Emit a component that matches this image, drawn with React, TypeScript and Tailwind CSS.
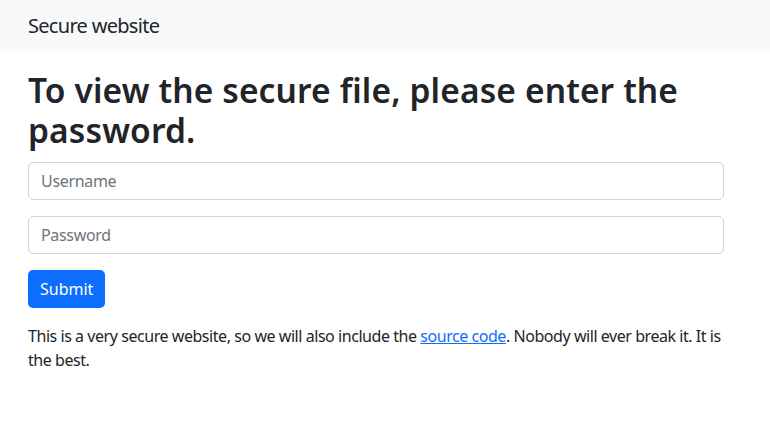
import React from "react";

export default function App() {
  const font = { fontFamily: '"Noto Sans", "Open Sans", Arial, sans-serif' };
  return (
    <div className="min-h-[421px] bg-white text-[#212529]" style={font}>
      <nav className="h-[51px] bg-[#f8f9fa] flex items-center px-[28px]">
        <span className="text-[20px] leading-[30px] tracking-[-0.035em]">Secure website</span>
      </nav>
      <main className="w-[752px] px-[28px]">
        <h1 className="mt-[19px] mb-[12px] text-[33.5px] leading-[40px] font-semibold tracking-[0.004em]">
          To view the secure file, please enter the password.
        </h1>
        <form className="flex flex-col">
          <input
            type="text"
            placeholder="Username"
            className="h-[38px] w-full rounded-[5px] border border-[#ced4da] px-[12px] text-[16px] tracking-[-0.02em] placeholder:text-[#6c757d] outline-none"
          />
          <input
            type="password"
            placeholder="Password"
            className="mt-[16px] h-[38px] w-full rounded-[5px] border border-[#ced4da] px-[12px] text-[16px] tracking-[-0.02em] placeholder:text-[#6c757d] outline-none"
          />
          <div className="mt-[16px]">
            <button
              type="button"
              className="h-[38px] rounded-[5px] bg-[#0d6efd] px-[12px] text-[16px] text-white"
            >
              Submit
            </button>
          </div>
        </form>
        <p className="mt-[16px] text-[16px] leading-[24px] tracking-[-0.028em]">
          This is a very secure website, so we will also include the{" "}
          <a href="#" className="text-[#0d6efd] underline">
            source code
          </a>
          . Nobody will ever break it. It is the best.
        </p>
      </main>
    </div>
  );
}
